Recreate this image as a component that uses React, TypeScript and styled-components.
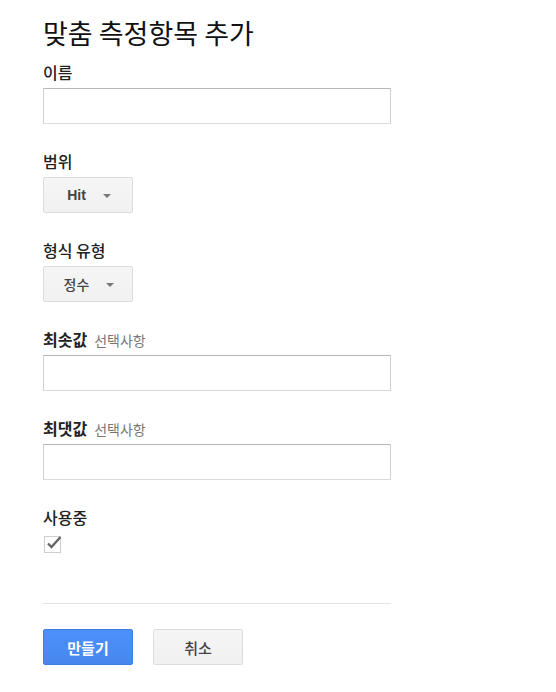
import styled, { createGlobalStyle } from "styled-components";

const GlobalStyle = createGlobalStyle`
  body {
    margin: 0;
    background: #fff;
    font-family: "Liberation Sans", "Noto Sans CJK KR", sans-serif;
    color: #222;
  }
`;

const Page = styled.div`
  width: 556px;
  padding: 16px 0 20px 43px;
  box-sizing: border-box;
`;

const Title = styled.h1`
  margin: 0 0 13px;
  font-family: "Noto Sans CJK KR", sans-serif;
  font-size: 27px;
  line-height: 33px;
  font-weight: 400;
  color: #111;
`;

const Field = styled.div<{ $last?: boolean }>`
  display: flex;
  flex-direction: column;
  align-items: flex-start;
  margin-bottom: ${(p) => (p.$last ? "0" : "27px")};
`;

const Label = styled.div<{ $strong?: boolean }>`
  font-family: "Noto Sans CJK KR", sans-serif;
  font-size: 16px;
  line-height: 20px;
  height: 20px;
  font-weight: ${(p) => (p.$strong ? 700 : 500)};
  color: #222;
  margin-bottom: 6px;
  display: flex;
  align-items: baseline;
  gap: 7px;
`;

const Optional = styled.span`
  font-size: 14px;
  line-height: 20px;
  font-weight: 400;
  color: #777;
`;

const TextInput = styled.input`
  width: 348px;
  height: 36px;
  box-sizing: border-box;
  border: 1px solid #c0c0c0;
  border-top-color: #b8b8b8;
  border-left-color: #d0d0d0;
  border-right-color: #d0d0d0;
  border-bottom-color: #d9d9d9;
  padding: 0 8px;
  font-size: 14px;
  outline: none;
`;

const Select = styled.button<{ $light?: boolean }>`
  display: inline-flex;
  align-items: center;
  justify-content: center;
  gap: 17px;
  width: 90px;
  height: 36px;
  box-sizing: border-box;
  border: 1px solid #dcdcdc;
  border-radius: 2px;
  background: linear-gradient(#f5f5f5, #f1f1f1);
  font-family: "Liberation Sans", "Noto Sans CJK KR", sans-serif;
  font-size: 14px;
  font-weight: ${(p) => (p.$light ? 500 : 700)};
  color: #444;
  padding: 0 0 0 2px;
`;

const Caret = styled.span`
  width: 0;
  height: 0;
  border-left: 4.5px solid transparent;
  border-right: 4.5px solid transparent;
  border-top: 4px solid #777;
  margin-top: 2px;
`;

const CheckBox = styled.span`
  position: relative;
  display: block;
  width: 15px;
  height: 15px;
  border: 1px solid #cfcfcf;
  margin: 3px 0 0 1px;

  svg {
    position: absolute;
    left: 1px;
    top: -2px;
  }
`;

const Divider = styled.hr`
  width: 348px;
  margin: 50px 0 25px;
  border: none;
  border-top: 1px solid #e5e5e5;
`;

const Actions = styled.div`
  display: flex;
  gap: 20px;
`;

const ActionButton = styled.button<{ $primary?: boolean }>`
  width: 90px;
  height: 36px;
  box-sizing: border-box;
  border-radius: 2px;
  border: 1px solid ${(p) => (p.$primary ? "#3b7ee6" : "#dcdcdc")};
  background: ${(p) =>
    p.$primary ? "linear-gradient(#4d90fe, #4787ed)" : "linear-gradient(#f5f5f5, #f1f1f1)"};
  color: ${(p) => (p.$primary ? "#fff" : "#444")};
  font-family: "Noto Sans CJK KR", sans-serif;
  font-size: 15px;
  font-weight: ${(p) => (p.$primary ? 700 : 500)};
  padding: 0;
`;

export default function App() {
  return (
    <Page>
      <GlobalStyle />
      <Title>맞춤 측정항목 추가</Title>

      <Field>
        <Label>이름</Label>
        <TextInput />
      </Field>

      <Field>
        <Label>범위</Label>
        <Select>
          Hit <Caret />
        </Select>
      </Field>

      <Field>
        <Label>형식 유형</Label>
        <Select $light>
          정수 <Caret />
        </Select>
      </Field>

      <Field>
        <Label $strong>
          최솟값 <Optional>선택사항</Optional>
        </Label>
        <TextInput />
      </Field>

      <Field>
        <Label $strong>
          최댓값 <Optional>선택사항</Optional>
        </Label>
        <TextInput />
      </Field>

      <Field $last>
        <Label>사용중</Label>
        <CheckBox>
          <svg width="16" height="15" viewBox="0 0 16 15">
            <path d="M2 8.5 L5.5 12 L14.5 2" fill="none" stroke="#666" strokeWidth="2.4" />
          </svg>
        </CheckBox>
      </Field>

      <Divider />

      <Actions>
        <ActionButton $primary>만들기</ActionButton>
        <ActionButton>취소</ActionButton>
      </Actions>
    </Page>
  );
}
